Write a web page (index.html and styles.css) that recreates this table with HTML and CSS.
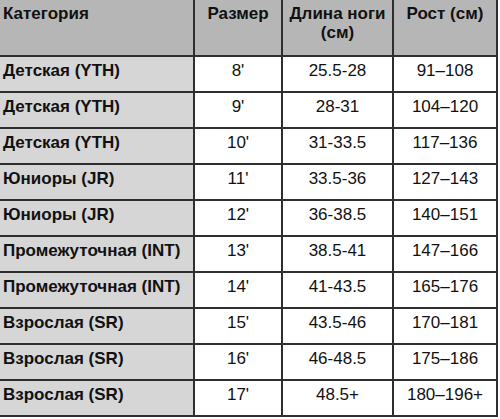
FILE: index.html
```html
<!DOCTYPE html>
<html lang="ru">
<head>
<meta charset="utf-8">
<title>Размеры</title>
<link rel="stylesheet" href="styles.css">
</head>
<body>
<div class="sheet">
  <div class="cell head cat">Категория</div>
  <div class="cell head">Размер</div>
  <div class="cell head">Длина ноги (см)</div>
  <div class="cell head">Рост (см)</div>

  <div class="cell cat">Детская (YTH)</div><div class="cell">8'</div><div class="cell">25.5-28</div><div class="cell">91–108</div>
  <div class="cell cat">Детская (YTH)</div><div class="cell">9'</div><div class="cell">28-31</div><div class="cell">104–120</div>
  <div class="cell cat">Детская (YTH)</div><div class="cell">10'</div><div class="cell">31-33.5</div><div class="cell">117–136</div>
  <div class="cell cat">Юниоры (JR)</div><div class="cell">11'</div><div class="cell">33.5-36</div><div class="cell">127–143</div>
  <div class="cell cat">Юниоры (JR)</div><div class="cell">12'</div><div class="cell">36-38.5</div><div class="cell">140–151</div>
  <div class="cell cat">Промежуточная (INT)</div><div class="cell">13'</div><div class="cell">38.5-41</div><div class="cell">147–166</div>
  <div class="cell cat">Промежуточная (INT)</div><div class="cell">14'</div><div class="cell">41-43.5</div><div class="cell">165–176</div>
  <div class="cell cat">Взрослая (SR)</div><div class="cell">15'</div><div class="cell">43.5-46</div><div class="cell">170–181</div>
  <div class="cell cat">Взрослая (SR)</div><div class="cell">16'</div><div class="cell">46-48.5</div><div class="cell">175–186</div>
  <div class="cell cat">Взрослая (SR)</div><div class="cell">17'</div><div class="cell">48.5+</div><div class="cell">180–196+</div>
</div>
</body>
</html>
```
FILE: styles.css
```css
html, body {
  margin: 0;
  padding: 0;
  background: #ffffff;
}
.sheet {
  display: grid;
  grid-template-columns: 195px 88px 111px 104px;
  grid-template-rows: 57px repeat(10, 36px);
  width: 500px;
  box-sizing: border-box;
  margin: -2px 0 0 -2px;
  border-top: 2px solid #2e2e2e;
  border-left: 2px solid #2e2e2e;
  font-family: "Liberation Sans", Arial, Helvetica, sans-serif;
  font-size: 17px;
  line-height: 19px;
  color: #111111;
}
.cell {
  box-sizing: border-box;
  border-right: 2px solid #2e2e2e;
  border-bottom: 2px solid #2e2e2e;
  padding: 4px 4px 0 4px;
  text-align: center;
  background: #ffffff;
}
.cat {
  text-align: left;
  padding-left: 3px;
  font-weight: bold;
  background: #d6d6d6;
}
.head {
  font-weight: bold;
  background: #b6b6b6;
}
```
